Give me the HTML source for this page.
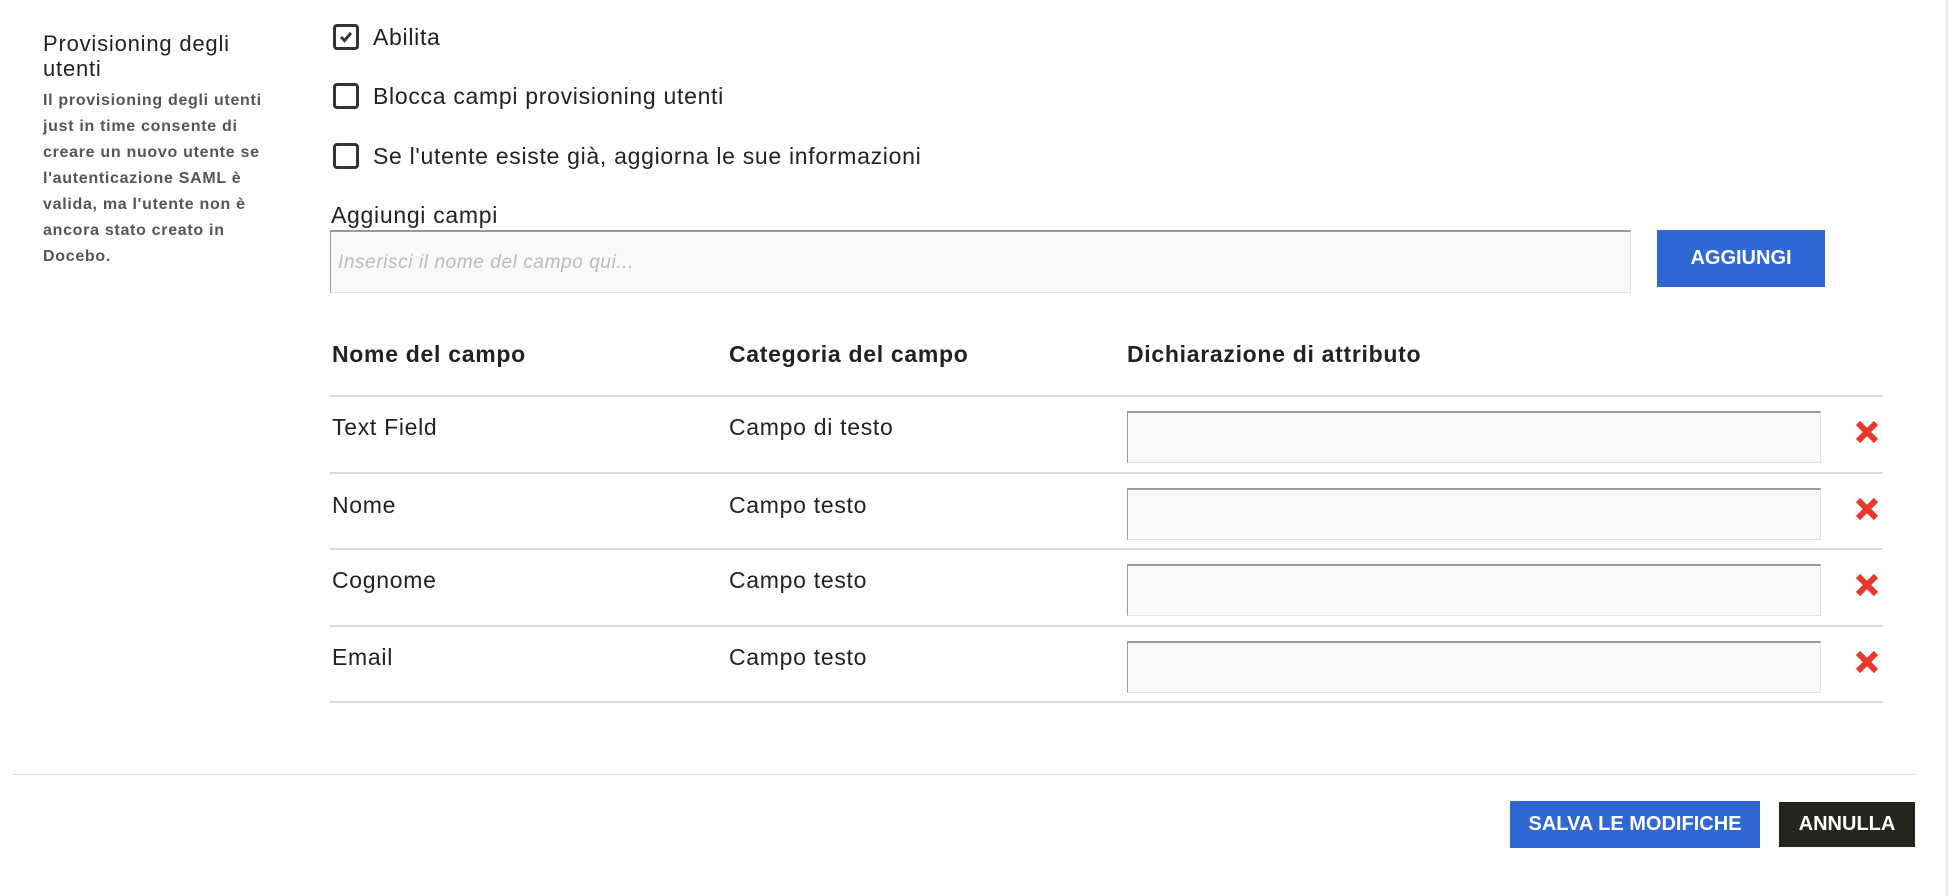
<!DOCTYPE html>
<html><head><meta charset="utf-8"><style>
*{margin:0;padding:0;box-sizing:border-box}
body{width:1948px;height:896px;background:#fff;position:relative;overflow:hidden;font-family:"Liberation Sans",sans-serif;color:#222}
.a{position:absolute;white-space:nowrap}
.cb{position:absolute;left:333px;width:26px;height:26px;border:3px solid #333;border-radius:4px;background:#fff}
.lbl{position:absolute;left:373px;font-size:23px;letter-spacing:0.7px;color:#222;white-space:nowrap}
.hl{position:absolute;left:330px;width:1553px;height:2px;background:#dadada}
.inp{position:absolute;left:1127px;width:694px;height:52px;background:#f9f9f9;border:1px solid #e2e2e2;border-top:2px solid #9a9a9a;border-left:1px solid #9a9a9a}
.cell{position:absolute;font-size:23px;letter-spacing:0.7px;color:#222;white-space:nowrap}
.x{position:absolute;left:1854px;width:26px;height:26px}
.btn{position:absolute;color:#fff;font-weight:bold;font-size:20px;display:flex;align-items:center;justify-content:center}
</style></head><body>
<div class="a" style="left:43px;top:31px;font-size:22px;letter-spacing:0.8px;line-height:25px;color:#222">Provisioning degli<br>utenti</div>
<div class="a" style="left:43px;top:88px;font-size:16px;letter-spacing:0.7px;line-height:26px;color:#555;font-weight:bold">Il provisioning degli utenti<br>just in time consente di<br>creare un nuovo utente se<br>l'autenticazione SAML è<br>valida, ma l'utente non è<br>ancora stato creato in<br>Docebo.</div>

<div class="cb" style="top:24px"><svg width="20" height="20" viewBox="0 0 20 20" style="position:absolute;left:0;top:0"><path d="M5 10 L8.5 13.5 L15 6" stroke="#333" stroke-width="3" fill="none"/></svg></div>
<div class="lbl" style="top:24px">Abilita</div>
<div class="cb" style="top:83px"></div>
<div class="lbl" style="top:83px">Blocca campi provisioning utenti</div>
<div class="cb" style="top:143px"></div>
<div class="lbl" style="top:143px">Se l'utente esiste già, aggiorna le sue informazioni</div>

<div class="lbl" style="left:331px;top:202px">Aggiungi campi</div>
<div class="a" style="left:330px;top:230px;width:1301px;height:63px;background:#f9f9f9;border:1px solid #e2e2e2;border-top:2px solid #9a9a9a;border-left:1px solid #9a9a9a"></div>
<div class="a" style="left:338px;top:252px;font-size:19px;letter-spacing:0.6px;font-style:italic;color:#bbb">Inserisci il nome del campo qui...</div>
<div class="btn" style="left:1657px;top:230px;width:168px;height:57px;background:#2f68d3">AGGIUNGI</div>

<div class="cell" style="left:332px;top:341px;font-weight:bold">Nome del campo</div>
<div class="cell" style="left:729px;top:341px;font-weight:bold">Categoria del campo</div>
<div class="cell" style="left:1127px;top:341px;font-weight:bold">Dichiarazione di attributo</div>

<div class="hl" style="top:395px"></div>
<div class="hl" style="top:472px"></div>
<div class="hl" style="top:548px"></div>
<div class="hl" style="top:625px"></div>
<div class="hl" style="top:701px"></div>

<div class="cell" style="left:332px;top:414px">Text Field</div>
<div class="cell" style="left:729px;top:414px">Campo di testo</div>
<div class="cell" style="left:332px;top:492px">Nome</div>
<div class="cell" style="left:729px;top:492px">Campo testo</div>
<div class="cell" style="left:332px;top:567px">Cognome</div>
<div class="cell" style="left:729px;top:567px">Campo testo</div>
<div class="cell" style="left:332px;top:644px">Email</div>
<div class="cell" style="left:729px;top:644px">Campo testo</div>

<div class="inp" style="top:411px"></div>
<div class="inp" style="top:488px"></div>
<div class="inp" style="top:564px"></div>
<div class="inp" style="top:641px"></div>

<svg class="x" style="top:419px" viewBox="0 0 26 26"><path d="M4 4 L22 22 M22 4 L4 22" stroke="#e8372b" stroke-width="6"/></svg>
<svg class="x" style="top:496px" viewBox="0 0 26 26"><path d="M4 4 L22 22 M22 4 L4 22" stroke="#e8372b" stroke-width="6"/></svg>
<svg class="x" style="top:572px" viewBox="0 0 26 26"><path d="M4 4 L22 22 M22 4 L4 22" stroke="#e8372b" stroke-width="6"/></svg>
<svg class="x" style="top:649px" viewBox="0 0 26 26"><path d="M4 4 L22 22 M22 4 L4 22" stroke="#e8372b" stroke-width="6"/></svg>

<div class="a" style="left:12px;top:774px;width:1903px;height:1px;background:#e2e2e2"></div>
<div class="btn" style="left:1510px;top:801px;width:250px;height:47px;background:#2f68d3">SALVA LE MODIFICHE</div>
<div class="btn" style="left:1779px;top:802px;width:136px;height:45px;background:#22261f">ANNULLA</div>
<div class="a" style="left:1946px;top:0;width:2px;height:896px;background:#e6e6e6"></div>
</body></html>
